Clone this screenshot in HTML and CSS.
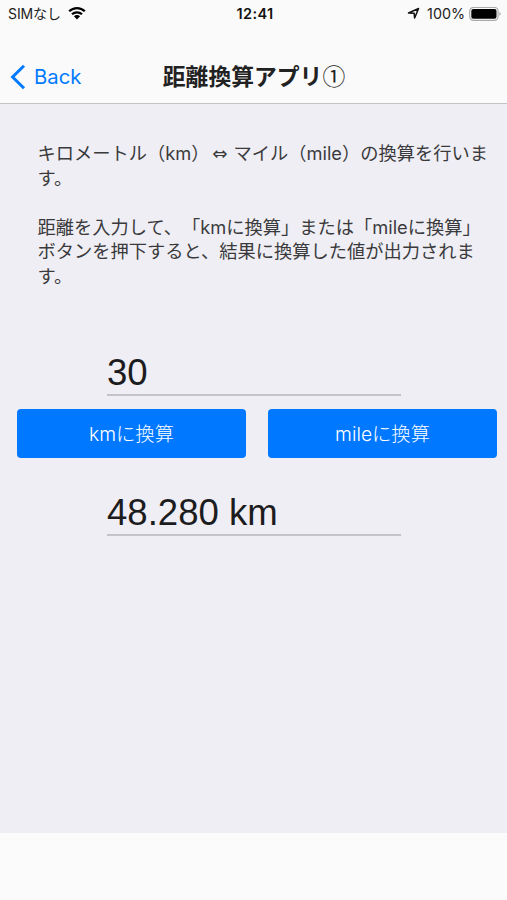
FILE: index.html
```html
<!DOCTYPE html>
<html lang="ja">
<head>
    <meta charset="UTF-8">
    <title>距離換算アプリ①</title>
    <link rel="stylesheet" href="styles.css">
</head>
<body>
    <div class="status-bar">
        <div class="status-left">
            <span class="carrier">SIMなし</span>
            <svg class="wifi" width="18" height="14" viewBox="0 0 18 14">
                <path d="M1.2 5.3 C5.6 1 12.4 1 16.8 5.3" fill="none" stroke="#000" stroke-width="2.3"/>
                <path d="M4 8.3 C6.8 5.6 11.2 5.6 14 8.3" fill="none" stroke="#000" stroke-width="2.2"/>
                <path d="M9 13.4 L5.9 10.3 C7.6 8.7 10.4 8.7 12.1 10.3 Z"/>
            </svg>
        </div>
        <span class="clock">12:41</span>
        <div class="status-right">
            <svg class="location" width="13" height="13" viewBox="0 0 13 13">
                <path d="M1.5 6 L11.6 1.5 L7.6 11 L7.2 6.3 Z" fill="none" stroke="#111" stroke-width="1.5" stroke-linejoin="round"/>
            </svg>
            <span class="percent">100%</span>
            <svg class="battery" width="33" height="15" viewBox="0 0 33 15">
                <rect x="0.7" y="0.4" width="28.4" height="13" rx="3.8" fill="none" stroke="#aaa" stroke-width="1.2"/>
                <rect x="2.3" y="2" width="25.2" height="9.8" rx="2"/>
                <path d="M30.4 5 C32.2 5.5 32.2 8.3 30.4 8.8 Z" fill="#aaa"/>
            </svg>
        </div>
    </div>

    <header class="navbar">
        <a class="back" href="#">
            <svg width="16" height="26" viewBox="0 0 16 26">
                <path d="M14 1.8 L2.6 13 L14 24.2" fill="none" stroke="#007aff" stroke-width="3"/>
            </svg>
            <span>Back</span>
        </a>
        <h1>距離換算アプリ<span class="number">①</span></h1>
    </header>

    <main class="content">
        <p class="description">キロメートル（km）<span class="arrow">⇔</span>マイル（mile）の換算を行いま<br>す。</p>
        <p class="description">距離を入力して、「kmに換算」または「mileに換算」<br>ボタンを押下すると、結果に換算した値が出力されま<br>す。</p>

        <input type="text" class="field" id="distance" value="30">
        <div class="buttons">
            <button class="convert-btn" id="to-km">kmに換算</button>
            <button class="convert-btn" id="to-mile">mileに換算</button>
        </div>
        <input type="text" class="field result" id="result" value="48.280 km" readonly>
    </main>

    <footer class="toolbar"></footer>
</body>
</html>
```

FILE: styles.css
```css
* { margin: 0; padding: 0; box-sizing: border-box; }
body {
    display: flex; flex-direction: column; height: 900px; overflow: hidden;
    font-family: Inter, "Noto Sans CJK JP", sans-serif; background-color: #efeef4; color: #222;
}
.status-bar {
    display: grid; grid-template-columns: 1fr auto 1fr; align-items: center;
    height: 28px; padding: 0 5px 0 8px; background-color: #fafafa; font-size: 14px; line-height: 28px;
}
.status-left, .status-right { display: flex; align-items: center; }
.status-left { gap: 7px; }
.wifi { margin-top: -2px; }
.status-right { justify-content: flex-end; }
.carrier { font-size: 14px; letter-spacing: -0.1px; white-space: nowrap; }
.clock { font-weight: 600; font-size: 14.5px; letter-spacing: 0.4px; color: #111; }
.percent { margin: 0 4px 0 7px; font-size: 14.3px; }
.location { margin-top: -1px; }
.navbar {
    display: grid; grid-template-columns: 1fr auto 1fr; align-items: center;
    height: 76px; padding: 22px 9px 0 10px; background-color: #fafafa; border-bottom: 1px solid #c4c4c8;
}
.back { display: flex; align-items: center; gap: 8px; color: #007aff; font-size: 20.3px; text-decoration: none; }
.navbar h1 { padding-bottom: 2px; font-size: 22.8px; font-weight: 700; line-height: 32px; font-family: "Noto Sans CJK JP", sans-serif; }
.number { font-weight: 400; }
.content { flex: 1; padding-top: 37px; }
.description {
    margin: 0 0 24.5px 37.5px; font-size: 18.25px; line-height: 24.5px; white-space: nowrap;
    font-family: Inter, "Noto Sans CJK JP", sans-serif; color: #3a3a3c; text-spacing-trim: space-all;
}
.arrow {
    display: inline-block; width: 24px; padding-right: 3px; text-align: center; line-height: 1;
    font-family: "DejaVu Sans", sans-serif;
}
.field {
    display: block; width: 294px; height: 46px; margin: 62px 0 0 107px; border: none;
    border-bottom: 2px solid #c4c3c9; background: transparent; outline: none;
    font-family: "Liberation Sans", sans-serif; font-size: 36.6px; color: #1c1c1e; padding-top: 2px;
}
.buttons { display: flex; gap: 22px; padding: 0 10px 0 17px; margin-top: 13px; }
.convert-btn {
    flex: 1; height: 49px; padding-bottom: 2px; border: none; border-radius: 4px; background-color: #0078ff;
    color: white; font-family: Inter, "Noto Sans CJK JP", sans-serif; font-size: 19.3px; font-weight: 300;
}
.result { margin-top: 32px; }
.toolbar { height: 67px; background-color: #fbfbfb; }
```
